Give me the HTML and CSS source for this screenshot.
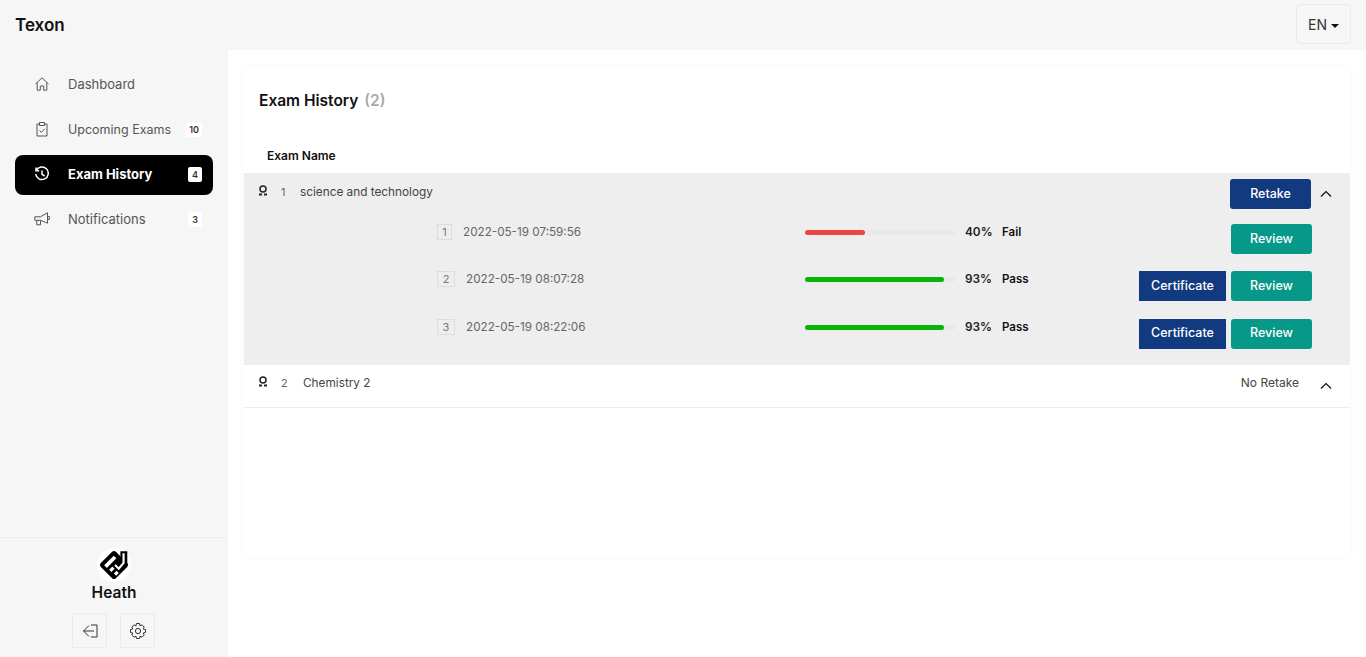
FILE: index.html
```html
<!DOCTYPE html>
<html lang="en">
<head>
  <meta charset="UTF-8">
  <meta name="viewport" content="width=device-width, initial-scale=1.0">
  <title>Exam History</title>
  <link rel="stylesheet" href="styles.css">
</head>

<body>
  <header class="topbar">
    <div class="brand">Texon</div>
    <button class="lang">EN<span class="caret"></span></button>
  </header>

  <div class="layout">
    <aside class="sidebar">
      <nav class="nav">
        <a class="nav-item">
          <svg class="nav-icon" viewBox="0 0 16 16"><path d="M1.500 8 8 1.800 14.500 8M3.200 6.500V14.200H6.300V10H9.700V14.200H12.800V6.500"/></svg>
          <span class="nav-label">Dashboard</span>
        </a>
        <a class="nav-item">
          <svg class="nav-icon" viewBox="0 0 16 16"><path d="M5.500 3H3V15H13V3H10.500M5.500 1.500H10.500V4.500H5.500ZM5.500 9.500 7.400 11.400 10.700 7.800"/></svg>
          <span class="nav-label upcoming">Upcoming Exams</span>
          <span class="badge">10</span>
        </a>
        <a class="nav-item active">
          <svg class="nav-icon" viewBox="0 0 16 16"><path d="M2.300 4.500A6.300 6.300 0 1 1 1.700 8M2 1.600V4.800H5.200M8 4.500V8.300L10.600 10"/></svg>
          <span class="nav-label">Exam History</span>
          <span class="badge">4</span>
        </a>
        <a class="nav-item">
          <svg class="nav-icon" viewBox="0 0 16 16"><path d="M.8 5.800H6.500L13.500 1.800V12.200L6.500 9.300H.8ZM2.800 9.300V13.800H6.500V9.300M13.500 5.500H15.300V8.500H13.500"/></svg>
          <span class="nav-label">Notifications</span>
          <span class="badge">3</span>
        </a>
      </nav>

      <div class="user">
        <svg class="logo" viewBox="0 0 32 32">
          <circle cx="16" cy="16" r="16" fill="#fff"/>
          <rect x="6" y="6" width="20" height="20" rx="2.500" transform="rotate(45 16 16)" fill="#000"/>
          <path d="M22 3H28.500V15L25 19 22 14Z" fill="#000"/>
          <path d="M8 17.500 17 8.500" stroke="#fff" stroke-width="3.500"/>
          <path d="M12.500 21.500 15.500 18.500M17 25 19.500 22.500" stroke="#fff" stroke-width="3"/>
          <path d="M17 16 20.500 19.500 25 14V5" stroke="#fff" stroke-width="2" fill="none"/>
        </svg>
        <div class="user-name">Heath</div>
        <div class="user-actions">
          <button class="square-btn">
            <svg viewBox="0 0 18 18"><path d="M8 3.500 2.500 9 8 14.500M2.500 9H13M10 3H16V15H10"/></svg>
          </button>
          <button class="square-btn">
            <svg viewBox="0 0 18 18"><circle cx="9" cy="9" r="2.600"/><path d="M7.500 1.500H10.500L11 3.800 13 2.800 15.200 5 14.200 7 16.500 7.500V10.500L14.200 11 15.200 13 13 15.200 11 14.200 10.500 16.500H7.500L7 14.200 5 15.200 2.800 13 3.800 11 1.500 10.500V7.500L3.800 7 2.800 5 5 2.800 7 3.800Z"/></svg>
          </button>
        </div>
      </div>
    </aside>

    <main class="main">
      <section class="card">
        <h2 class="card-title">Exam History <span class="count">(2)</span></h2>
        <div class="table-head">Exam Name</div>

        <div class="exam open">
          <div class="exam-row">
            <svg class="award" viewBox="0 0 10 12"><circle cx="5" cy="4" r="3"/><path class="award-feet" d="M1 9.500H4M6 9.500H9"/></svg>
            <span class="exam-no">1</span>
            <span class="exam-name">science and technology</span>
            <button class="btn btn-blue retake">Retake</button>
            <svg class="chevron" viewBox="0 0 12 12"><path d="M1 8.500 6 3.500 11 8.500"/></svg>
          </div>

          <div class="attempt">
            <div class="attempt-info"><span class="attempt-no">1</span><span class="attempt-date">2022-05-19 07:59:56</span></div>
            <div class="progress"><div class="progress-fill fail" style="width: 40%"></div></div>
            <span class="pct">40%</span>
            <span class="result">Fail</span>
            <div class="attempt-btns">
              <button class="btn btn-green">Review</button>
            </div>
          </div>
          <div class="attempt">
            <div class="attempt-info"><span class="attempt-no wide">2</span><span class="attempt-date">2022-05-19 08:07:28</span></div>
            <div class="progress"><div class="progress-fill pass" style="width: 92.500%"></div></div>
            <span class="pct">93%</span>
            <span class="result">Pass</span>
            <div class="attempt-btns">
              <button class="btn btn-cert">Certificate</button>
              <button class="btn btn-green">Review</button>
            </div>
          </div>
          <div class="attempt">
            <div class="attempt-info"><span class="attempt-no wide">3</span><span class="attempt-date">2022-05-19 08:22:06</span></div>
            <div class="progress"><div class="progress-fill pass" style="width: 92.500%"></div></div>
            <span class="pct">93%</span>
            <span class="result">Pass</span>
            <div class="attempt-btns">
              <button class="btn btn-cert">Certificate</button>
              <button class="btn btn-green">Review</button>
            </div>
          </div>
        </div>

        <div class="exam">
          <div class="exam-row">
            <svg class="award" viewBox="0 0 10 12"><circle cx="5" cy="4" r="3"/><path class="award-feet" d="M1 9.500H4M6 9.500H9"/></svg>
            <span class="exam-no second">2</span>
            <span class="exam-name">Chemistry 2</span>
            <span class="no-retake">No Retake</span>
            <svg class="chevron" viewBox="0 0 12 12"><path d="M1 8.500 6 3.500 11 8.500"/></svg>
          </div>
        </div>
      </section>
    </main>
  </div>
</body>
</html>
```

FILE: styles.css
```css
* {
  box-sizing: border-box;
}

body {
  margin: 0;
  height: 657px;
  overflow: hidden;
  background-color: #f6f6f6;
  font-family: Inter, "Liberation Sans", sans-serif;
  color: #111;
}

button {
  font-family: inherit;
  cursor: pointer;
}

svg {
  fill: none;
  stroke: currentColor;
}

.topbar {
  height: 50px;
  display: flex;
  justify-content: space-between;
  align-items: center;
  padding: 0 15px;
}

.brand {
  font-size: 17px;
  font-weight: 600;
}

.lang {
  width: 55px;
  height: 40px;
  margin-top: -2px;
  background-color: #f6f6f6;
  border: 1px solid #ebebeb;
  border-radius: 4px;
  font-size: 14px;
  color: #333;
}

.caret {
  display: inline-block;
  margin-left: 4px;
  vertical-align: 2px;
  border-top: 4px solid #111;
  border-left: 4px solid transparent;
  border-right: 4px solid transparent;
}

.layout {
  display: flex;
  height: 607px;
}

.sidebar {
  width: 228px;
  flex-shrink: 0;
  display: flex;
  flex-direction: column;
  justify-content: space-between;
}

.nav {
  padding: 15px 15px 0;
  display: flex;
  flex-direction: column;
  gap: 5px;
}

.nav-item {
  height: 40px;
  display: flex;
  align-items: center;
  padding: 0 11px 2px 19px;
  border-radius: 8px;
  font-size: 13px;
  color: #555;
}

.nav-item.active {
  background-color: #000;
  color: #fff;
  font-weight: 700;
}

.nav-icon {
  width: 16px;
  height: 16px;
  margin-right: 18px;
  stroke-width: 1;
}

.nav-item.active .nav-icon {
  stroke-width: 1.500;
}

.nav-label {
  flex: 1;
}

.nav-label.upcoming {
  font-size: 12.500px;
}

.badge {
  min-width: 14px;
  padding: 0 3px;
  height: 15px;
  background-color: #fff;
  border-radius: 2px;
  font-size: 9px;
  font-weight: 600;
  line-height: 15px;
  text-align: center;
  color: #333;
}

.user {
  height: 120px;
  border-top: 1px solid #eee;
  display: flex;
  flex-direction: column;
  align-items: center;
  padding-top: 10px;
}

.logo {
  width: 34px;
  height: 34px;
  stroke: none;
}

.user-name {
  margin-top: 2px;
  font-size: 15.500px;
  line-height: 18px;
  font-weight: 600;
}

.user-actions {
  display: flex;
  gap: 13px;
  margin: 11px 1px 0 0;
}

.square-btn {
  width: 35px;
  height: 35px;
  padding: 0;
  display: flex;
  align-items: center;
  justify-content: center;
  background-color: #f6f6f6;
  border: 1px solid #ebebeb;
  color: #333;
}

.square-btn svg {
  width: 18px;
  height: 18px;
  stroke-width: 1;
}

.main {
  flex: 1;
  background-color: #fff;
  padding: 16px 15px 0;
}

.card {
  height: 492px;
  padding-top: 1px;
  background-color: #fff;
  box-shadow: 0 0 5px rgba(0, 0, 0, 0.04);
}

.card-title {
  margin: 24px 0 0 16px;
  font-size: 15.500px;
  font-weight: 600;
  line-height: 20px;
}

.count {
  margin-left: 2px;
  color: #aaa;
}

.table-head {
  margin: 37px 0 0 24px;
  height: 24px;
  font-size: 12px;
  font-weight: 600;
}

.exam {
  margin-left: 1px;
  margin-right: 1px;
  border-bottom: 1px solid #eee;
}

.exam.open {
  background-color: #eee;
  border-bottom: 0;
  height: 192px;
  margin-top: 1px;
}

.exam-row {
  height: 42px;
  display: flex;
  align-items: flex-start;
  padding-left: 14px;
  padding-top: 11px;
  font-size: 11.800px;
  color: #444;
}

.exam.open .exam-row {
  height: 36px;
  padding-top: 12px;
}

.award {
  width: 10px;
  height: 12px;
  stroke-width: 1.500;
  color: #222;
}

.award-feet {
  stroke-width: 2;
}

.exam-no {
  width: 32px;
  padding-left: 13px;
  font-size: 11px;
  color: #666;
}

.exam-no.second {
  width: 35px;
}

.exam-name {
  flex: 1;
}

.retake {
  margin: -6px 0 0;
}

.no-retake {
  margin: -1px 21px 0 0;
  font-size: 12px;
  line-height: 16px;
}

.chevron {
  width: 12px;
  height: 12px;
  margin: 4px 18px 0 0;
  stroke-width: 1.200;
  color: #111;
}

.exam.open .chevron {
  margin: 3px 18px 0 9px;
}

.attempt {
  display: flex;
  align-items: flex-start;
  height: 47.400px;
  padding-top: 15px;
  font-size: 12px;
}

.attempt-info {
  width: 368px;
  margin-left: 193px;
  display: flex;
  align-items: center;
  color: #666;
}

.attempt-no {
  width: 15px;
  height: 16px;
  margin-right: 11px;
  border: 1px solid #ddd;
  background-color: #eee;
  font-size: 11px;
  line-height: 14px;
  text-align: center;
  color: #777;
}

.attempt-no.wide {
  width: 18px;
}

.attempt-date {
  font-size: 11.700px;
}

.progress {
  width: 150px;
  height: 5px;
  margin-top: 6px;
  background-color: #e8e8e8;
  border-radius: 3px;
}

.progress-fill {
  height: 100%;
  border-radius: 3px;
}

.progress-fill.fail {
  background-color: #ef4444;
}

.progress-fill.pass {
  background-color: #07b507;
}

.pct {
  width: 37px;
  margin: 1px 0 0 10px;
  font-size: 11.800px;
  font-weight: 600;
  color: #222;
}

.result {
  margin-top: 1px;
  font-size: 11.500px;
  font-weight: 600;
  line-height: 15px;
}

.attempt-btns {
  margin-left: auto;
  margin-right: 38px;
  display: flex;
  gap: 5px;
}

.btn {
  height: 30px;
  padding: 0 0 2px;
  border: 0;
  border-radius: 3px;
  font-size: 12.500px;
  font-weight: 500;
  color: #fff;
}

.btn-blue {
  width: 81px;
  background-color: #123a80;
}

.btn-green {
  width: 81px;
  background-color: #069989;
}

.btn-cert {
  width: 87px;
  background-color: #123a80;
  border-radius: 0;
}
```
